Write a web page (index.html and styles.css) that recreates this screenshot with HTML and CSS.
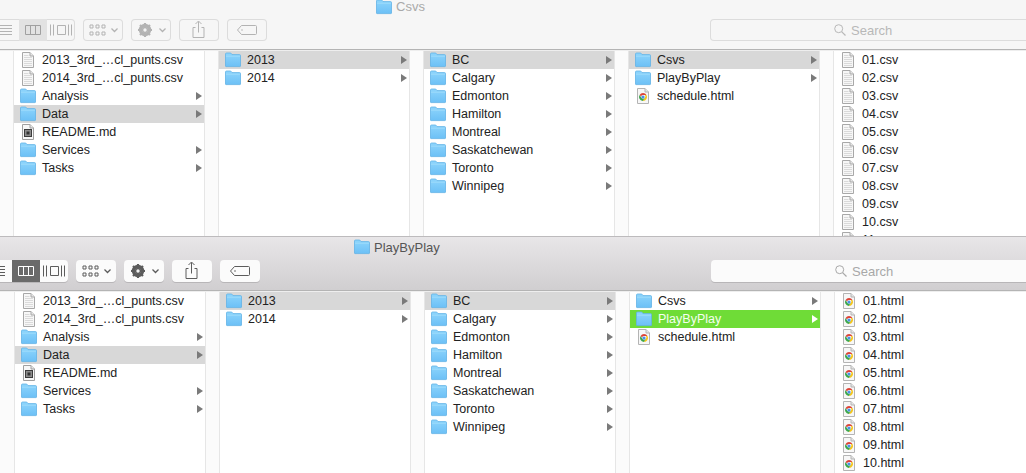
FILE: index.html
```html
<!DOCTYPE html>
<html lang="en">
<head>
    <meta charset="UTF-8">
    <title>Finder columns</title>
    <link rel="stylesheet" href="styles.css">
</head>
<body>
    <svg class="sprite" xmlns="http://www.w3.org/2000/svg">
        <defs>
            <linearGradient id="folderFill" x1="0" y1="0" x2="0" y2="1">
                <stop offset="0" stop-color="#8ed5fc"/>
                <stop offset="1" stop-color="#6cc0f6"/>
            </linearGradient>
            <symbol id="folder" viewBox="0 0 16 16">
                <path d="M.5 3V2a1 1 0 0 1 1-1h4.2l1.3 1.6h7.5a1 1 0 0 1 1 1V14a.6.6 0 0 1-.6.6H1.1a.6.6 0 0 1-.6-.6z" fill="url(#folderFill)" stroke="#62b2e6" stroke-width=".8"/>
                <path d="M1 4.2h14" stroke="#a5defc" stroke-width=".8"/>
            </symbol>
            <symbol id="file" viewBox="0 0 16 16">
                <path d="M2.5.5h7.5l3.5 3.5v11.5h-11z" fill="#f7f7f7" stroke="#a8a8a8"/>
                <path d="M10 .5V4h3.5" fill="#e6e6e6" stroke="#a8a8a8"/>
                <path d="M4 3.5h4.5M4 5.5h8M4 7.5h8M4 9.5h8M4 11.5h8M4 13.5h8" stroke="#dadada"/>
            </symbol>
            <symbol id="readme" viewBox="0 0 16 16">
                <path d="M2.5.5h7.5l3.5 3.5v11.5h-11z" fill="#f7f7f7" stroke="#a0a0a0"/>
                <path d="M10 .5V4h3.5" fill="#e6e6e6" stroke="#a0a0a0"/>
                <rect x="4.5" y="5.5" width="7" height="7" fill="#8c8c8c" stroke="#3c3c3c"/>
                <rect x="6.5" y="7.5" width="3" height="3" fill="#333"/>
            </symbol>
            <symbol id="chrome" viewBox="0 0 16 16">
                <path d="M2.5.5h7.5l3.5 3.5v11.5h-11z" fill="#f7f7f7" stroke="#b4b4b4"/>
                <path d="M10 .5V4h3.5" fill="#e6e6e6" stroke="#b4b4b4"/>
                <path d="M8 5a4 4 0 0 1 3.5 2H8a2 2 0 0 0-1.9 1.4L4.6 6.9A4 4 0 0 1 8 5z" fill="#dc4437"/>
                <path d="M11.5 7a4 4 0 0 1-3.7 6l1.9-3a2 2 0 0 0 0-3z" fill="#f5c518"/>
                <path d="M4.6 6.9 6.5 10a2 2 0 0 0 3.2 0L7.8 13a4 4 0 0 1-3.2-6.1z" fill="#3ba64c"/>
                <circle cx="8" cy="9" r="1.6" fill="#4a8fe8"/>
            </symbol>
            <symbol id="list" viewBox="0 0 28 22">
                <path d="M6 6.5h15M6 9.5h15M6 12.5h15M6 15.5h15" stroke="currentColor"/>
            </symbol>
            <symbol id="cols" viewBox="0 0 28 22">
                <path d="M6.5 6.5h15v9h-15zM11.5 6.5v9M16.5 6.5v9" fill="none" stroke="currentColor"/>
            </symbol>
            <symbol id="flow" viewBox="0 0 28 22">
                <path d="M10.5 6.5h8v9h-8zM3.500 5.500v11M6.500 5.500v11M21.500 5.500v11M24.500 5.500v11" fill="none" stroke="currentColor"/>
            </symbol>
            <symbol id="grid" viewBox="0 0 40 22">
                <path d="M7.500 6.500h3v3h-3zM13.500 6.500h3v3h-3zM19.500 6.500h3v3h-3zM7.500 13.500h3v3h-3zM13.500 13.500h3v3h-3zM19.500 13.500h3v3h-3z" transform="translate(-.5 -.5)" fill="none" stroke="currentColor"/>
                <path d="M28.500 9.500l3 3 3-3" fill="none" stroke="currentColor" stroke-width="1.300"/>
            </symbol>
            <symbol id="gear" viewBox="0 0 40 22">
                <circle cx="14" cy="11" r="4.700" fill="none" stroke="currentColor" stroke-width="3"/>
                <path d="M14 4v14M7 11h14M9 6l10 10M19 6 9 16" stroke="currentColor" stroke-width="2.200"/>
                <circle cx="14" cy="11" r="1.700" fill="#f2f2f2"/>
                <path d="M28.500 9.500l3 3 3-3" fill="none" stroke="currentColor" stroke-width="1.300"/>
            </symbol>
            <symbol id="share" viewBox="0 0 40 22">
                <path d="M17 9.500h-2.500v10h11v-10H23M20 14.500V3.500M17 6l3-3 3 3" fill="none" stroke="currentColor" transform="translate(-.5 -1)"/>
            </symbol>
            <symbol id="tag" viewBox="0 0 40 22">
                <path d="M14.500 6.500h14a1 1 0 0 1 1 1v7a1 1 0 0 1-1 1h-14l-4-4.500z" fill="none" stroke="currentColor"/>
                <circle cx="15" cy="11" r=".8" fill="currentColor"/>
            </symbol>
            <symbol id="lens" viewBox="0 0 12 12">
                <circle cx="4.700" cy="4.700" r="4" fill="none" stroke="currentColor"/>
                <path d="M7.600 7.600l3.900 3.900" stroke="currentColor" stroke-width="1.200"/>
            </symbol>
        </defs>
    </svg>

    <div class="window window-back">
        <div class="titlebar">
            <svg class="ico"><use href="#folder"/></svg>
            <span>Csvs</span>
        </div>
        <div class="toolbar">
            <div class="btn-group">
                <svg class="seg"><use href="#list"/></svg>
                <svg class="seg seg-on"><use href="#cols"/></svg>
                <svg class="seg"><use href="#flow"/></svg>
            </div>
            <svg class="btn"><use href="#grid"/></svg>
            <svg class="btn"><use href="#gear"/></svg>
            <svg class="btn"><use href="#share"/></svg>
            <svg class="btn"><use href="#tag"/></svg>
            <div class="search"><svg class="lens"><use href="#lens"/></svg>Search</div>
        </div>
        <div class="columns">
            <div class="column">
                <div class="row"><svg class="ico"><use href="#file"/></svg><span class="name">2013_3rd_…cl_punts.csv</span></div>
                <div class="row"><svg class="ico"><use href="#file"/></svg><span class="name">2014_3rd_…cl_punts.csv</span></div>
                <div class="row"><svg class="ico"><use href="#folder"/></svg><span class="name">Analysis</span><i class="arrow"></i></div>
                <div class="row selected"><svg class="ico"><use href="#folder"/></svg><span class="name">Data</span><i class="arrow"></i></div>
                <div class="row"><svg class="ico"><use href="#readme"/></svg><span class="name">README.md</span></div>
                <div class="row"><svg class="ico"><use href="#folder"/></svg><span class="name">Services</span><i class="arrow"></i></div>
                <div class="row"><svg class="ico"><use href="#folder"/></svg><span class="name">Tasks</span><i class="arrow"></i></div>
            </div>
            <div class="column">
                <div class="row selected"><svg class="ico"><use href="#folder"/></svg><span class="name">2013</span><i class="arrow"></i></div>
                <div class="row"><svg class="ico"><use href="#folder"/></svg><span class="name">2014</span><i class="arrow"></i></div>
            </div>
            <div class="column">
                <div class="row selected"><svg class="ico"><use href="#folder"/></svg><span class="name">BC</span><i class="arrow"></i></div>
                <div class="row"><svg class="ico"><use href="#folder"/></svg><span class="name">Calgary</span><i class="arrow"></i></div>
                <div class="row"><svg class="ico"><use href="#folder"/></svg><span class="name">Edmonton</span><i class="arrow"></i></div>
                <div class="row"><svg class="ico"><use href="#folder"/></svg><span class="name">Hamilton</span><i class="arrow"></i></div>
                <div class="row"><svg class="ico"><use href="#folder"/></svg><span class="name">Montreal</span><i class="arrow"></i></div>
                <div class="row"><svg class="ico"><use href="#folder"/></svg><span class="name">Saskatchewan</span><i class="arrow"></i></div>
                <div class="row"><svg class="ico"><use href="#folder"/></svg><span class="name">Toronto</span><i class="arrow"></i></div>
                <div class="row"><svg class="ico"><use href="#folder"/></svg><span class="name">Winnipeg</span><i class="arrow"></i></div>
            </div>
            <div class="column">
                <div class="row selected"><svg class="ico"><use href="#folder"/></svg><span class="name">Csvs</span><i class="arrow"></i></div>
                <div class="row"><svg class="ico"><use href="#folder"/></svg><span class="name">PlayByPlay</span><i class="arrow"></i></div>
                <div class="row"><svg class="ico"><use href="#chrome"/></svg><span class="name">schedule.html</span></div>
            </div>
            <div class="column column-last">
                <div class="row"><svg class="ico"><use href="#file"/></svg><span class="name">01.csv</span></div>
                <div class="row"><svg class="ico"><use href="#file"/></svg><span class="name">02.csv</span></div>
                <div class="row"><svg class="ico"><use href="#file"/></svg><span class="name">03.csv</span></div>
                <div class="row"><svg class="ico"><use href="#file"/></svg><span class="name">04.csv</span></div>
                <div class="row"><svg class="ico"><use href="#file"/></svg><span class="name">05.csv</span></div>
                <div class="row"><svg class="ico"><use href="#file"/></svg><span class="name">06.csv</span></div>
                <div class="row"><svg class="ico"><use href="#file"/></svg><span class="name">07.csv</span></div>
                <div class="row"><svg class="ico"><use href="#file"/></svg><span class="name">08.csv</span></div>
                <div class="row"><svg class="ico"><use href="#file"/></svg><span class="name">09.csv</span></div>
                <div class="row"><svg class="ico"><use href="#file"/></svg><span class="name">10.csv</span></div>
                <div class="row"><svg class="ico"><use href="#file"/></svg><span class="name">11.csv</span></div>
            </div>
        </div>
    </div>

    <div class="window window-front">
        <div class="titlebar">
            <svg class="ico"><use href="#folder"/></svg>
            <span>PlayByPlay</span>
        </div>
        <div class="toolbar">
            <div class="btn-group">
                <svg class="seg"><use href="#list"/></svg>
                <svg class="seg seg-on"><use href="#cols"/></svg>
                <svg class="seg"><use href="#flow"/></svg>
            </div>
            <svg class="btn"><use href="#grid"/></svg>
            <svg class="btn"><use href="#gear"/></svg>
            <svg class="btn"><use href="#share"/></svg>
            <svg class="btn"><use href="#tag"/></svg>
            <div class="search"><svg class="lens"><use href="#lens"/></svg>Search</div>
        </div>
        <div class="columns">
            <div class="column">
                <div class="row"><svg class="ico"><use href="#file"/></svg><span class="name">2013_3rd_…cl_punts.csv</span></div>
                <div class="row"><svg class="ico"><use href="#file"/></svg><span class="name">2014_3rd_…cl_punts.csv</span></div>
                <div class="row"><svg class="ico"><use href="#folder"/></svg><span class="name">Analysis</span><i class="arrow"></i></div>
                <div class="row selected"><svg class="ico"><use href="#folder"/></svg><span class="name">Data</span><i class="arrow"></i></div>
                <div class="row"><svg class="ico"><use href="#readme"/></svg><span class="name">README.md</span></div>
                <div class="row"><svg class="ico"><use href="#folder"/></svg><span class="name">Services</span><i class="arrow"></i></div>
                <div class="row"><svg class="ico"><use href="#folder"/></svg><span class="name">Tasks</span><i class="arrow"></i></div>
            </div>
            <div class="column">
                <div class="row selected"><svg class="ico"><use href="#folder"/></svg><span class="name">2013</span><i class="arrow"></i></div>
                <div class="row"><svg class="ico"><use href="#folder"/></svg><span class="name">2014</span><i class="arrow"></i></div>
            </div>
            <div class="column">
                <div class="row selected"><svg class="ico"><use href="#folder"/></svg><span class="name">BC</span><i class="arrow"></i></div>
                <div class="row"><svg class="ico"><use href="#folder"/></svg><span class="name">Calgary</span><i class="arrow"></i></div>
                <div class="row"><svg class="ico"><use href="#folder"/></svg><span class="name">Edmonton</span><i class="arrow"></i></div>
                <div class="row"><svg class="ico"><use href="#folder"/></svg><span class="name">Hamilton</span><i class="arrow"></i></div>
                <div class="row"><svg class="ico"><use href="#folder"/></svg><span class="name">Montreal</span><i class="arrow"></i></div>
                <div class="row"><svg class="ico"><use href="#folder"/></svg><span class="name">Saskatchewan</span><i class="arrow"></i></div>
                <div class="row"><svg class="ico"><use href="#folder"/></svg><span class="name">Toronto</span><i class="arrow"></i></div>
                <div class="row"><svg class="ico"><use href="#folder"/></svg><span class="name">Winnipeg</span><i class="arrow"></i></div>
            </div>
            <div class="column">
                <div class="row"><svg class="ico"><use href="#folder"/></svg><span class="name">Csvs</span><i class="arrow"></i></div>
                <div class="row active"><svg class="ico"><use href="#folder"/></svg><span class="name">PlayByPlay</span><i class="arrow"></i></div>
                <div class="row"><svg class="ico"><use href="#chrome"/></svg><span class="name">schedule.html</span></div>
            </div>
            <div class="column column-last">
                <div class="row"><svg class="ico"><use href="#chrome"/></svg><span class="name">01.html</span></div>
                <div class="row"><svg class="ico"><use href="#chrome"/></svg><span class="name">02.html</span></div>
                <div class="row"><svg class="ico"><use href="#chrome"/></svg><span class="name">03.html</span></div>
                <div class="row"><svg class="ico"><use href="#chrome"/></svg><span class="name">04.html</span></div>
                <div class="row"><svg class="ico"><use href="#chrome"/></svg><span class="name">05.html</span></div>
                <div class="row"><svg class="ico"><use href="#chrome"/></svg><span class="name">06.html</span></div>
                <div class="row"><svg class="ico"><use href="#chrome"/></svg><span class="name">07.html</span></div>
                <div class="row"><svg class="ico"><use href="#chrome"/></svg><span class="name">08.html</span></div>
                <div class="row"><svg class="ico"><use href="#chrome"/></svg><span class="name">09.html</span></div>
                <div class="row"><svg class="ico"><use href="#chrome"/></svg><span class="name">10.html</span></div>
                <div class="row"><svg class="ico"><use href="#chrome"/></svg><span class="name">11.html</span></div>
            </div>
        </div>
    </div>
</body>
</html>
```
FILE: styles.css
```css
/* General */
html, body {
    margin: 0;
    height: 473px;
    overflow: hidden;
}
body {
    font-family: "Liberation Sans", Arial, sans-serif;
    font-size: 12.5px;
    color: #222;
    background: #fff;
}
.sprite {
    display: block;
    width: 0;
    height: 0;
}

/* Windows */
.window {
    display: flex;
    flex-direction: column;
    overflow: hidden;
}
.window-back {
    height: 236px;
    background: #f6f6f6;
}
.window-front {
    height: 237px;
    background: linear-gradient(#e8e6e8, #d0ced0 54px);
    border-top: 1px solid #bdbbbd;
    box-sizing: border-box;
}

/* Title bar */
.titlebar {
    display: flex;
    align-items: center;
    gap: 4px;
    font-size: 13px;
}
.window-back .titlebar {
    height: 13px;
    padding-left: 376px;
    color: #a9a9a9;
}
.window-front .titlebar {
    height: 14px;
    margin-top: 3px;
    padding-left: 354px;
    color: #555;
}

/* Toolbar */
.toolbar {
    display: flex;
    gap: 8px;
    flex: none;
    height: 22px;
}
.window-back .toolbar {
    margin: 6px 0 8px -9px;
    padding-bottom: 0;
    color: #b3b3b3;
}
.window-front .toolbar {
    margin: 6px 0 8px -16px;
    color: #5c5c5c;
}
.btn-group {
    display: flex;
    flex: none;
    height: 22px;
    border-radius: 4px;
    overflow: hidden;
}
.seg {
    display: block;
    width: 28px;
    height: 22px;
}
.btn {
    display: block;
    flex: none;
    width: 40px;
    height: 22px;
    border-radius: 4px;
}
.search {
    display: flex;
    align-items: center;
    flex: none;
    width: 340px;
    height: 22px;
    border-radius: 4px;
    box-sizing: border-box;
    padding-left: 124px;
    font-size: 13px;
}
.lens {
    width: 12px;
    height: 12px;
    margin-right: 5px;
}

/* Inactive window has outlined controls */
.window-back .btn-group,
.window-back .btn,
.window-back .search {
    box-shadow: inset 0 0 0 1px #dcdcdc;
}
.window-back .seg-on {
    background: #e2e2e2;
    color: #a0a0a0;
}
.window-back .search {
    margin-left: 435px;
    background: #f6f6f6;
    color: #b8b8b8;
}

/* Active window has white controls */
.window-front .btn-group,
.window-front .btn,
.window-front .search {
    background: #fbfbfb;
    box-shadow: 0 1px 0 #b8b6b8;
}
.window-front .seg-on {
    background: #6a6a6a;
    color: #fff;
}
.window-front .search {
    margin-left: 443px;
    color: #a8a8a8;
}

/* Columns */
.columns {
    display: flex;
    flex: 1;
    min-height: 0;
    background: #fbfbfb;
    border-top: 1px solid #b4b4b4;
    box-shadow: inset 0 1px 0 #eee;
    padding-top: 1px;
}
.window-back .columns {
    padding-left: 14px;
}
.window-front .columns {
    padding-left: 15px;
}
.column {
    flex: none;
    width: 190px;
    margin-right: 15px;
    background: #fff;
    box-shadow: -1px 0 0 #e6e6e6, 1px 0 0 #e6e6e6;
}
.column-last {
    flex: 1;
    margin-right: 0;
}

/* Rows */
.row {
    display: flex;
    align-items: center;
    height: 18px;
    white-space: nowrap;
}
.row .ico {
    margin: 0 6px;
}
.ico {
    flex: none;
    width: 16px;
    height: 16px;
}
.name {
    flex: 1;
}
.arrow {
    width: 0;
    height: 0;
    margin-right: 2px;
    border-left: 6px solid #7a7a7a;
    border-top: 4px solid transparent;
    border-bottom: 4px solid transparent;
}
.selected {
    background: #d8d8d8;
}
.active {
    background: #6fdc37;
    color: #f4fff0;
}
.active .arrow {
    border-left-color: #fff;
}
```
